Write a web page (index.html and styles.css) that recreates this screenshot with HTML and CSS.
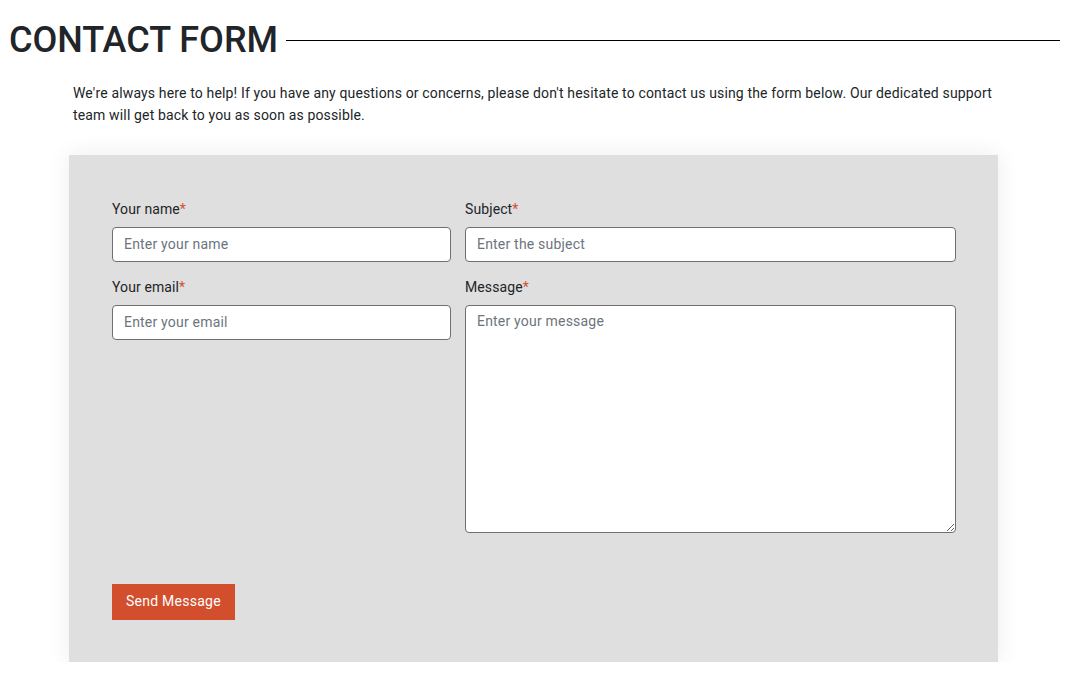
FILE: index.html
```html
<!DOCTYPE html>
<html lang="en">
<head>
<meta charset="utf-8">
<title>Contact Form</title>
<link rel="stylesheet" href="styles.css">
</head>
<body>
<header class="title-row">
  <h1 class="title">CONTACT FORM</h1>
  <span class="title-line"></span>
</header>
<main class="content">
  <p class="intro">We're always here to help! If you have any questions or concerns, please don't hesitate to contact us using the form below. Our dedicated support team will get back to you as soon as possible.</p>
  <form class="card">
    <div class="grid">
      <div class="col-left">
        <label class="label" for="name">Your name<span class="req">*</span></label>
        <input class="field" id="name" type="text" placeholder="Enter your name">
        <label class="label" for="email">Your email<span class="req">*</span></label>
        <input class="field" id="email" type="email" placeholder="Enter your email">
      </div>
      <div class="col-right">
        <label class="label" for="subject">Subject<span class="req">*</span></label>
        <input class="field" id="subject" type="text" placeholder="Enter the subject">
        <label class="label" for="message">Message<span class="req">*</span></label>
        <textarea class="field area" id="message" placeholder="Enter your message"></textarea>
      </div>
    </div>
    <button class="btn" type="button">Send Message</button>
  </form>
</main>
</body>
</html>
```
FILE: styles.css
```css
* { box-sizing: border-box; }
body {
  margin: 8px;
  font-family: Roboto, "Liberation Sans", Arial, sans-serif;
  color: #212529;
  background: #fff;
}
.title-row {
  display: flex;
  align-items: center;
  gap: 8px;
  margin: 12px 6px 0 1px;
}
.title {
  margin: 0;
  font-size: 36px;
  font-weight: 500;
  line-height: 40px;
  color: #212529;
  white-space: nowrap;
}
.title-line {
  flex: 1;
  height: 1px;
  background: #000;
}
.content {
  margin: 0 0 0 61px;
  width: 929px;
}
.intro {
  margin: 22px 0 29px 0;
  padding: 0 0 0 4px;
  font-size: 14px;
  line-height: 22px;
  letter-spacing: 0.15px;
}
.card {
  background: #dfdfdf;
  box-shadow: 0 0 22px rgba(0,0,0,0.08);
  padding: 43px 42px 42px 43px;
}
.grid {
  display: grid;
  grid-template-columns: 339px 1fr;
  column-gap: 14px;
}
.col-left, .col-right {
  display: flex;
  flex-direction: column;
}
.label {
  font-size: 14px;
  line-height: 21px;
  padding-top: 1px;
  margin-bottom: 7px;
  color: #212529;
  letter-spacing: 0.1px;
}
.req { color: #d34e2c; }
.field {
  height: 35px;
  margin-bottom: 14px;
  border: 1px solid #6f6f6f;
  border-radius: 4px;
  background: #fff;
  padding: 5px 11px 7px;
  font-family: inherit;
  font-size: 14px;
  letter-spacing: 0.2px;
  color: #212529;
}
.field::placeholder { color: #6c757d; }
.area {
  height: 228px;
  resize: vertical;
  padding-top: 7px;
}
.btn {
  margin-top: 37px;
  display: block;
  height: 36px;
  padding: 0 14px 2px;
  border: none;
  background: #d34e2c;
  color: #fff;
  font-family: inherit;
  font-size: 14px;
  letter-spacing: 0.25px;
}
```
